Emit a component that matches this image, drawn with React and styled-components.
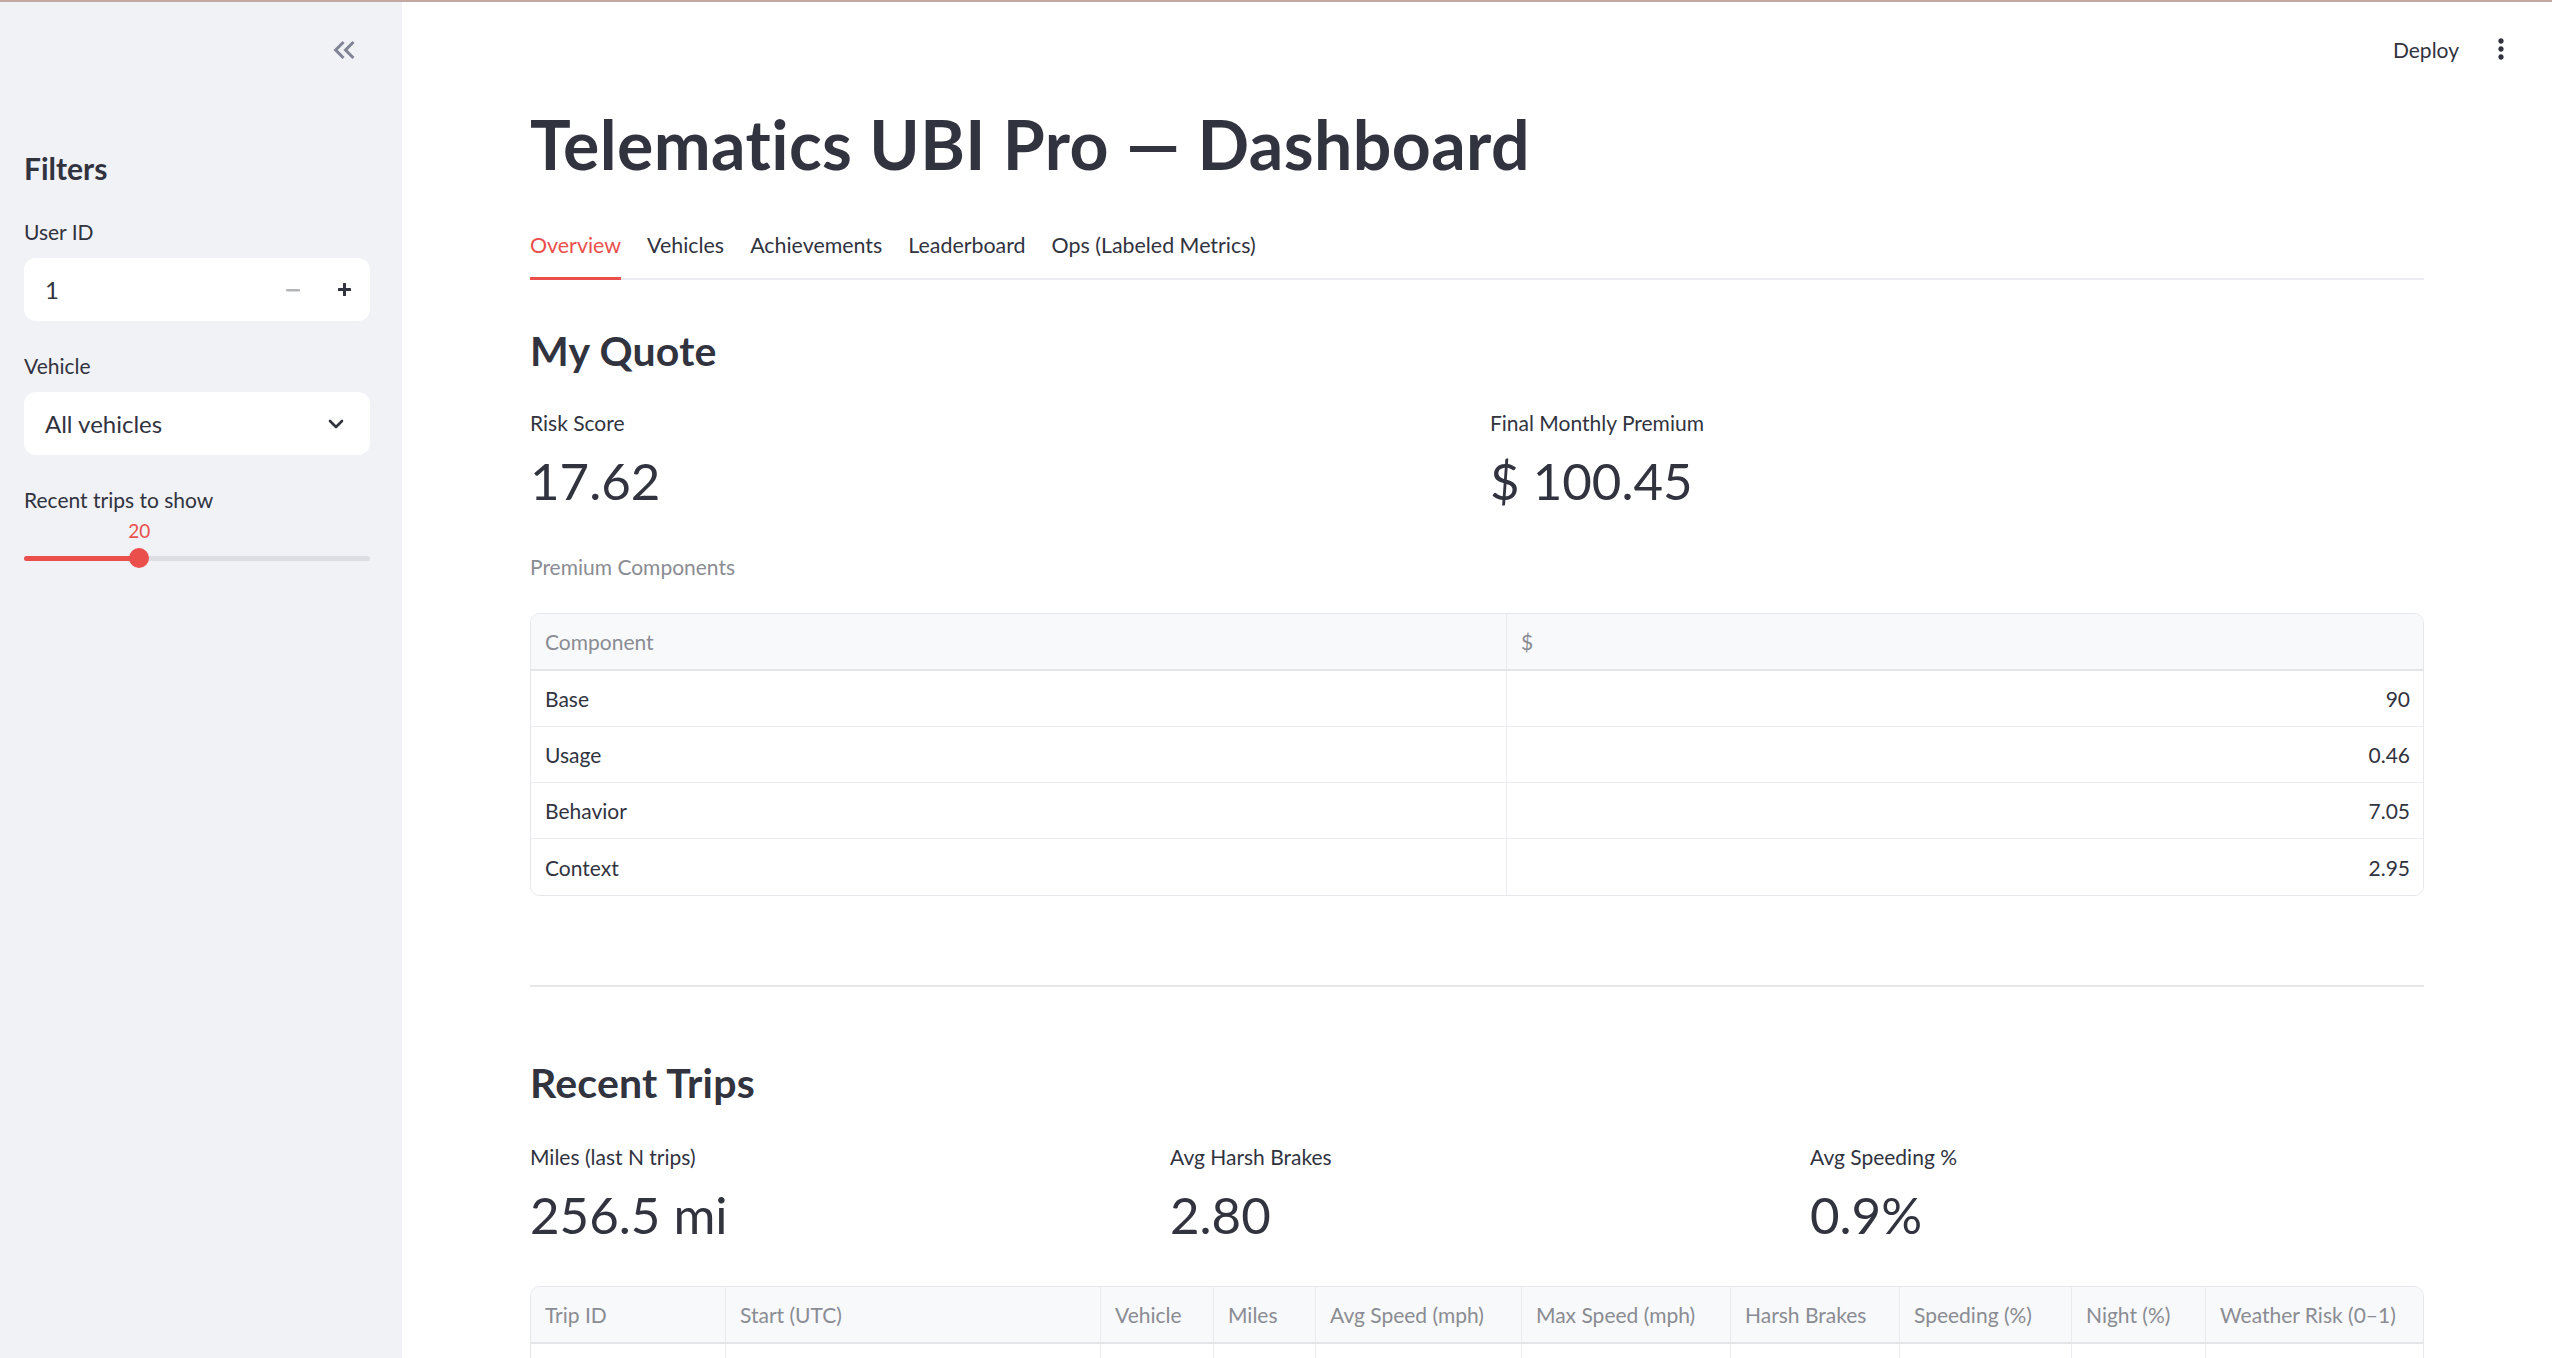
import React from "react";
import styled, { createGlobalStyle } from "styled-components";

const RED = "#eb4f4b";
const INK = "#31333f";

const GlobalStyle = createGlobalStyle`
  html, body {
    margin: 0;
    padding: 0;
    height: 100%;
    overflow: hidden;
    background: #ffffff;
  }
  body {
    font-family: Lato, "Liberation Sans", sans-serif;
    color: ${INK};
  }
  * { box-sizing: border-box; }
`;

const quoteRows = [
  ["Base", "90"],
  ["Usage", "0.46"],
  ["Behavior", "7.05"],
  ["Context", "2.95"],
];

const tripCols = ["195px", "375px", "113px", "102px", "206px", "209px", "169px", "172px", "134px", "1fr"];
const tripHead = [
  "Trip ID",
  "Start (UTC)",
  "Vehicle",
  "Miles",
  "Avg Speed (mph)",
  "Max Speed (mph)",
  "Harsh Brakes",
  "Speeding (%)",
  "Night (%)",
  "Weather Risk (0–1)",
];
// only the top edge of the first row is on screen
const tripRowCount = 1;

const tabs = ["Overview", "Vehicles", "Achievements", "Leaderboard", "Ops (Labeled Metrics)"];

// slider config: min 5, max 50
const SLIDER = { min: 5, max: 50, value: 20 };

const Shell = styled.div`
  display: flex;
  flex-direction: column;
  height: 100vh;
  overflow: hidden;
`;

const TopLine = styled.div`
  height: 2px;
  flex: none;
  background: #c4a8a2;
`;

const Body = styled.div`
  flex: 1;
  display: flex;
  min-height: 0;
`;

const Sidebar = styled.aside`
  width: 402px;
  flex: none;
  background: #f0f2f6;
  padding: 0 32px 0 24px;
  display: flex;
  flex-direction: column;
`;

const CollapseRow = styled.div`
  height: 96px;
  flex: none;
  display: flex;
  align-items: center;
  justify-content: flex-end;
  margin-right: 8px;
`;

const SidebarTitle = styled.h2`
  margin: 52px 0 0;
  font-size: 30px;
  line-height: 36px;
  font-weight: 700;
`;

const Field = styled.div`
  display: flex;
  flex-direction: column;
  margin-top: ${(p) => p.$top}px;
`;

const FieldLabel = styled.label`
  font-size: 21px;
  line-height: 30px;
  height: 30px;
`;

const Control = styled.div`
  margin-top: 11px;
  height: 63px;
  background: #ffffff;
  border-radius: 12px;
  display: flex;
  align-items: center;
  padding: 0 ${(p) => p.$padRight}px 0 21px;
  font-size: 24px;
`;

const ControlText = styled.span`
  flex: 1;
`;

const StepButtons = styled.div`
  display: flex;
  align-items: center;
  gap: 38px;
`;

const SliderValue = styled.div`
  position: relative;
  margin-top: 4px;
  height: 24px;
  color: ${RED};
  font-size: 19px;
  line-height: 24px;
`;

const ValueTag = styled.span`
  position: absolute;
  top: 0;
  transform: translateX(-50%);
`;

const SliderTrack = styled.div`
  position: relative;
  margin-top: 5px;
  height: 20px;
  display: flex;
  align-items: center;
`;

const Rail = styled.div`
  width: 100%;
  height: 5px;
  border-radius: 3px;
  background: #dcdee4;
  overflow: hidden;
`;

const Fill = styled.div`
  height: 100%;
  background: ${RED};
`;

const Thumb = styled.span`
  position: absolute;
  top: 0;
  width: 20px;
  height: 20px;
  border-radius: 50%;
  background: ${RED};
  transform: translateX(-50%);
`;

const Main = styled.main`
  flex: 1;
  min-width: 0;
  overflow: hidden;
  display: flex;
  flex-direction: column;
`;

const TopBar = styled.header`
  height: 94px;
  flex: none;
  display: flex;
  align-items: center;
  justify-content: flex-end;
  padding-right: 35px;
  gap: 26px;
`;

const Deploy = styled.span`
  font-size: 21px;
  color: ${INK};
`;

const Content = styled.div`
  padding: 0 128px;
  display: flex;
  flex-direction: column;
`;

const Title = styled.h1`
  margin: 8px 0 0;
  font-size: 68px;
  line-height: 80px;
  font-weight: 700;
  letter-spacing: 0.4px;
`;

const TabList = styled.div`
  margin-top: 41px;
  display: flex;
  gap: 26px;
  border-bottom: 2px solid #ebecef;
`;

const Tab = styled.div`
  font-size: 21.4px;
  line-height: 40px;
  padding-bottom: 12px;
  margin-bottom: -2px;
  color: ${(p) => (p.$active ? RED : INK)};
  border-bottom: 3px solid ${(p) => (p.$active ? RED : "transparent")};
`;

const SectionTitle = styled.h3`
  margin: ${(p) => p.$top}px 0 0;
  font-size: 41px;
  line-height: 56px;
  font-weight: 700;
  letter-spacing: 0.2px;
`;

const MetricGrid = styled.div`
  display: grid;
  grid-template-columns: repeat(${(p) => p.$cols}, 1fr);
  gap: 26px;
  margin-top: ${(p) => p.$top}px;
`;

const Metric = styled.div`
  display: flex;
  flex-direction: column;
`;

const MetricLabel = styled.div`
  font-size: 21px;
  line-height: 30px;
`;

const MetricValue = styled.div`
  margin-top: 8px;
  font-size: 51px;
  line-height: 70px;
`;

const Caption = styled.div`
  margin-top: 36px;
  font-size: 21px;
  line-height: 30px;
  color: #8a8c93;
`;

const Table = styled.div`
  margin-top: ${(p) => p.$top}px;
  border: 1px solid #e6e7eb;
  border-radius: 10px;
  overflow: hidden;
`;

const Row = styled.div`
  display: grid;
  grid-template-columns: ${(p) => p.$cols};
  height: ${(p) => (p.$head ? 57 : 56)}px;
  background: ${(p) => (p.$head ? "#f8f9fb" : "#ffffff")};
  border-bottom: ${(p) => (p.$head ? "2px solid #e4e5e9" : "1px solid #ebecef")};
  &:last-child {
    border-bottom: none;
  }
`;

const Cell = styled.div`
  display: flex;
  align-items: center;
  justify-content: ${(p) => (p.$num ? "flex-end" : "flex-start")};
  padding: 0 13px 0 14px;
  font-size: 21px;
  color: ${(p) => (p.$head ? "#8a8c93" : INK)};
  border-right: 1px solid #ebecef;
  white-space: nowrap;
  overflow: hidden;
  &:last-child {
    border-right: none;
  }
`;

const Divider = styled.hr`
  margin: 89px 0 0;
  border: none;
  height: 2px;
  background: #e6e7ea;
`;

const DoubleLeft = () => (
  <svg width="36" height="36" viewBox="0 0 24 24" fill="#808495">
    <path d="M17.59 18L19 16.59 14.42 12 19 7.41 17.59 6l-6 6z" />
    <path d="M11 18l1.41-1.41L7.83 12l4.58-4.59L11 6l-6 6z" />
  </svg>
);

const MoreVert = () => (
  <svg width="32" height="32" viewBox="0 0 24 24" fill={INK}>
    <path d="M12 8c1.1 0 2-.9 2-2s-.9-2-2-2-2 .9-2 2 .9 2 2 2zm0 2c-1.1 0-2 .9-2 2s.9 2 2 2 2-.9 2-2-.9-2-2-2zm0 6c-1.1 0-2 .9-2 2s.9 2 2 2 2-.9 2-2-.9-2-2-2z" />
  </svg>
);

const Minus = () => (
  <svg width="14" height="14" viewBox="0 0 14 14">
    <rect x="0" y="6" width="14" height="2.4" rx="1" fill="#b3b5bb" />
  </svg>
);

const Plus = () => (
  <svg width="13" height="13" viewBox="0 0 13 13" fill={INK}>
    <rect x="0" y="5" width="13" height="3" rx="0.5" />
    <rect x="5" y="0" width="3" height="13" rx="0.5" />
  </svg>
);

const ChevronDown = () => (
  <svg width="18" height="18" viewBox="0 0 18 18">
    <path d="M3 6l6 6 6-6" fill="none" stroke={INK} strokeWidth="2.6" strokeLinecap="round" strokeLinejoin="round" />
  </svg>
);

const Slider = ({ min, max, value }) => {
  const pct = ((value - min) / (max - min)) * 100;
  return (
    <>
      <SliderValue>
        <ValueTag style={{ left: `${pct}%` }}>{value}</ValueTag>
      </SliderValue>
      <SliderTrack>
        <Rail>
          <Fill style={{ width: `${pct}%` }} />
        </Rail>
        <Thumb style={{ left: `${pct}%` }} />
      </SliderTrack>
    </>
  );
};

const App = () => {
  const quoteCols = "976px 1fr";
  const tripTemplate = tripCols.join(" ");
  return (
    <Shell>
      <GlobalStyle />
      <TopLine />
      <Body>
        <Sidebar>
          <CollapseRow>
            <DoubleLeft />
          </CollapseRow>
          <SidebarTitle>Filters</SidebarTitle>
          <Field $top={31}>
            <FieldLabel>User ID</FieldLabel>
            <Control $padRight={19}>
              <ControlText>1</ControlText>
              <StepButtons>
                <Minus />
                <Plus />
              </StepButtons>
            </Control>
          </Field>
          <Field $top={30}>
            <FieldLabel>Vehicle</FieldLabel>
            <Control $padRight={25}>
              <ControlText>All vehicles</ControlText>
              <ChevronDown />
            </Control>
          </Field>
          <Field $top={30}>
            <FieldLabel>Recent trips to show</FieldLabel>
            <Slider {...SLIDER} />
          </Field>
        </Sidebar>

        <Main>
          <TopBar>
            <Deploy>Deploy</Deploy>
            <MoreVert />
          </TopBar>
          <Content>
            <Title>Telematics UBI Pro — Dashboard</Title>
            <TabList>
              {tabs.map((t, i) => (
                <Tab key={t} $active={i === 0}>
                  {t}
                </Tab>
              ))}
            </TabList>

            <SectionTitle $top={43}>My Quote</SectionTitle>
            <MetricGrid $cols={2} $top={29}>
              <Metric>
                <MetricLabel>Risk Score</MetricLabel>
                <MetricValue>17.62</MetricValue>
              </Metric>
              <Metric>
                <MetricLabel>Final Monthly Premium</MetricLabel>
                <MetricValue>$ 100.45</MetricValue>
              </Metric>
            </MetricGrid>

            <Caption>Premium Components</Caption>
            <Table $top={31}>
              <Row $head $cols={quoteCols}>
                <Cell $head>Component</Cell>
                <Cell $head>$</Cell>
              </Row>
              {quoteRows.map(([name, val]) => (
                <Row key={name} $cols={quoteCols}>
                  <Cell>{name}</Cell>
                  <Cell $num>{val}</Cell>
                </Row>
              ))}
            </Table>

            <Divider />

            <SectionTitle $top={68}>Recent Trips</SectionTitle>
            <MetricGrid $cols={3} $top={31}>
              <Metric>
                <MetricLabel>Miles (last N trips)</MetricLabel>
                <MetricValue>256.5 mi</MetricValue>
              </Metric>
              <Metric>
                <MetricLabel>Avg Harsh Brakes</MetricLabel>
                <MetricValue>2.80</MetricValue>
              </Metric>
              <Metric>
                <MetricLabel>Avg Speeding %</MetricLabel>
                <MetricValue>0.9%</MetricValue>
              </Metric>
            </MetricGrid>

            <Table $top={36}>
              <Row $head $cols={tripTemplate}>
                {tripHead.map((h) => (
                  <Cell $head key={h}>
                    {h}
                  </Cell>
                ))}
              </Row>
              {Array.from({ length: tripRowCount }).map((_, r) => (
                <Row key={r} $cols={tripTemplate}>
                  {tripHead.map((h) => (
                    <Cell key={h} />
                  ))}
                </Row>
              ))}
            </Table>
          </Content>
        </Main>
      </Body>
    </Shell>
  );
};

export default App;
